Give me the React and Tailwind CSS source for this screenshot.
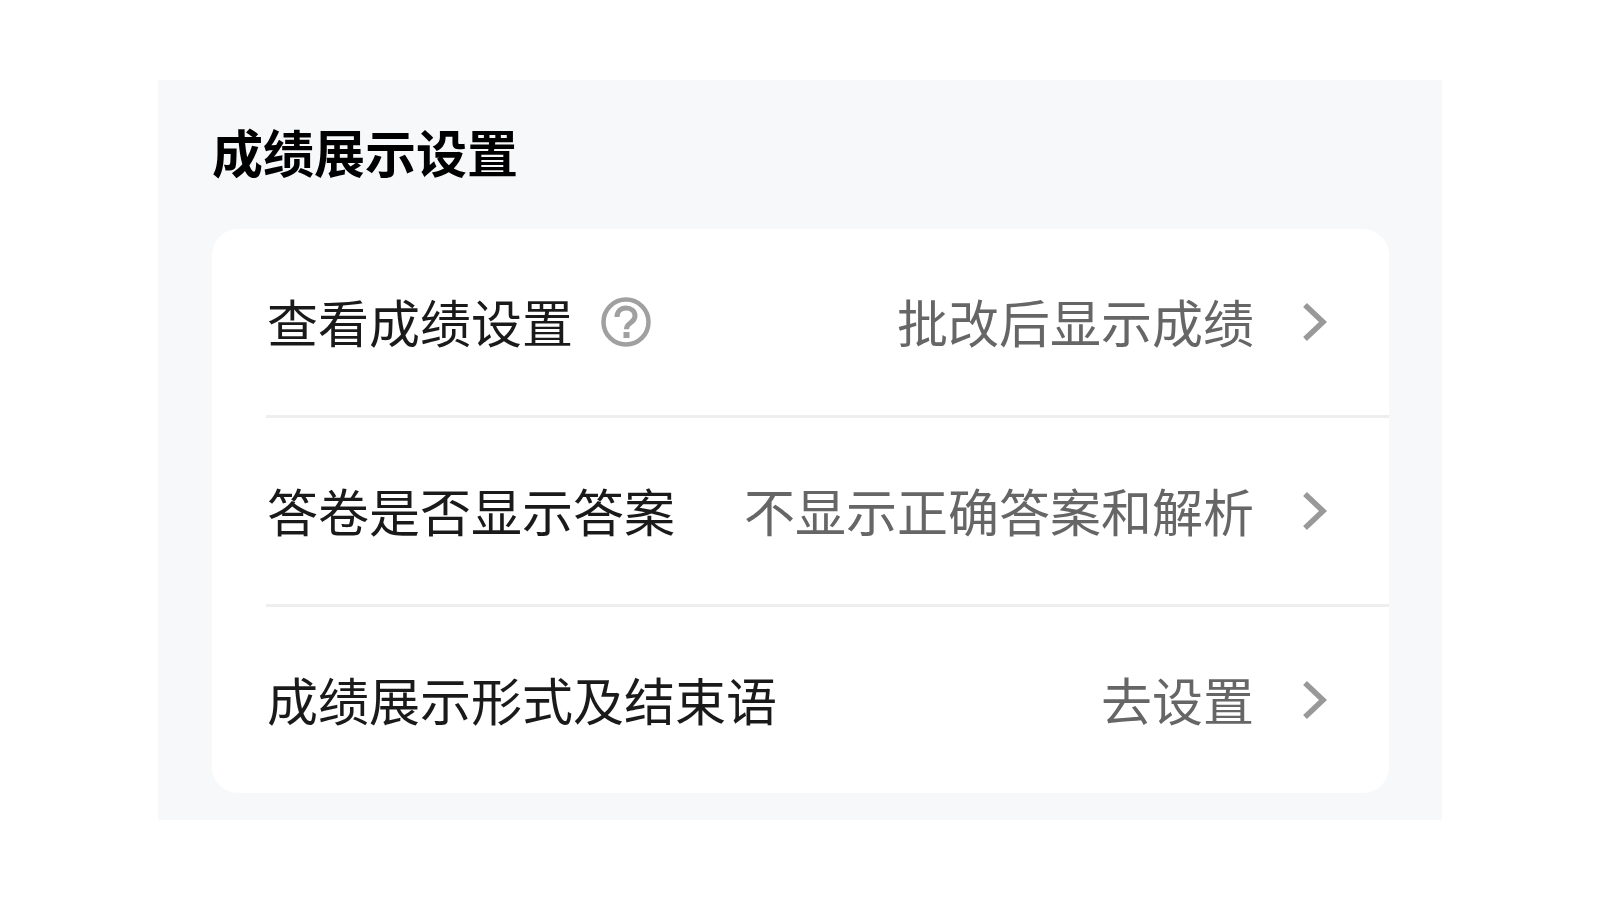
import React from 'react';

const rows = [
    { label: '查看成绩设置', help: true, value: '批改后显示成绩' },
    { label: '答卷是否显示答案', value: '不显示正确答案和解析' },
    { label: '成绩展示形式及结束语', value: '去设置' },
];

const HelpIcon = () => (
    <svg viewBox="0 0 50 50" className="w-[50px] h-[50px] ml-[28px] shrink-0" fill="none" stroke="#a0a0a0">
        <circle cx="25" cy="25" r="22.500" strokeWidth="4.500" />
        <path d="M16 20c0-6 4-9 9-9s9 3 9 8c0 4-2.500 5.500-5 7.200-2 1.300-3.500 2.800-3.500 6" strokeWidth="5" />
        <rect x="22.500" y="35" width="6" height="6" fill="#a0a0a0" stroke="none" />
    </svg>
);

const Chevron = () => (
    <svg viewBox="0 0 24 38" className="w-[24px] h-[38px] ml-[49px] shrink-0" fill="none" stroke="#999999" strokeWidth="5.500">
        <path d="M2 2l18 17L2 36" />
    </svg>
);

export default function App() {
    return (
        <div className="w-[1600px] h-[900px] bg-white pt-[80px] pl-[158px] font-['Liberation_Sans','Noto_Sans_CJK_SC',sans-serif]">
            <div className="w-[1284px] h-[740px] bg-[#f7f8fa] px-[54px] pt-[46px]">
                <h2 className="h-[60px] text-[51px] leading-[60px] font-bold text-black">成绩展示设置</h2>
                <div className="mt-[43px] w-[1177px] h-[564px] bg-white rounded-[26px] pl-[54px] flex flex-col">
                    {rows.map((row, i) => (
                        <div
                            key={row.label}
                            className={`flex items-center pr-[62px] ${i < 2 ? 'h-[189px] border-b-[3px] border-[#eeeeee]' : 'h-[186px]'}`}
                        >
                            <span className="pt-[8px] ml-[1px] text-[51px] text-[#1a1a1a]">{row.label}</span>
                            {row.help && <HelpIcon />}
                            <span className="pt-[8px] ml-auto text-[51px] text-[#666666]">{row.value}</span>
                            <Chevron />
                        </div>
                    ))}
                </div>
            </div>
        </div>
    );
}
